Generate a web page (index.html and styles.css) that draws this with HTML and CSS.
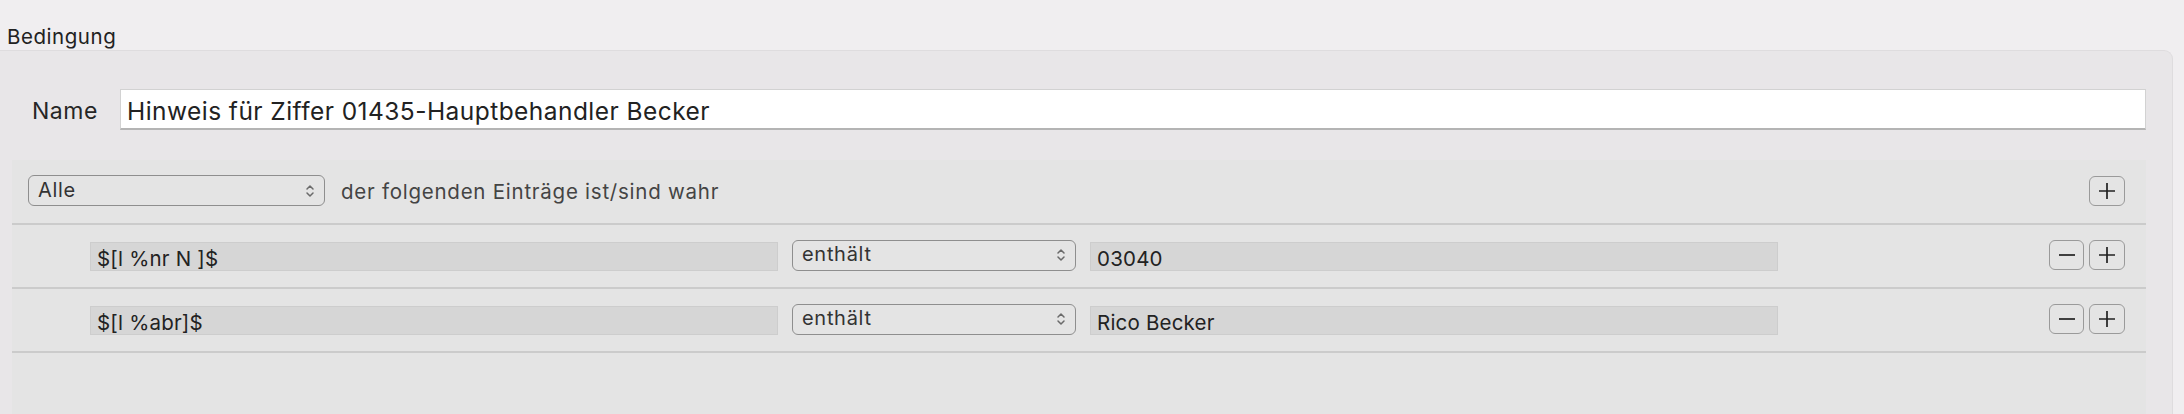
FILE: index.html
```html
<!DOCTYPE html>
<html lang="de">
<head>
<meta charset="utf-8">
<title>Bedingung</title>
<link rel="stylesheet" href="styles.css">
</head>
<body>
<div class="title">Bedingung</div>
<div class="panel">
  <div class="name-row">
    <span class="name-label">Name</span>
    <div class="name-input">Hinweis für Ziffer 01435-Hauptbehandler Becker</div>
  </div>
  <div class="rules">
    <div class="rule-head">
      <div class="popup popup-all"><span>Alle</span>
        <svg class="chev" viewBox="0 0 10 16" width="10" height="16"><path d="M2 6 L5 3 L8 6 M2 10 L5 13 L8 10" fill="none" stroke="#6a6a6a" stroke-width="1.5" stroke-linecap="round" stroke-linejoin="round"/></svg>
      </div>
      <span class="head-text">der folgenden Einträge ist/sind wahr</span>
      <div class="spacer"></div>
      <div class="btn"><svg viewBox="0 0 20 20" width="20" height="20"><path d="M2 10 H18 M10 2 V18" stroke="#222" stroke-width="1.7"/></svg></div>
    </div>
    <div class="rule">
      <div class="field">$[l %nr N ]$</div>
      <div class="popup popup-op"><span>enthält</span>
        <svg class="chev" viewBox="0 0 10 16" width="10" height="16"><path d="M2 6 L5 3 L8 6 M2 10 L5 13 L8 10" fill="none" stroke="#6a6a6a" stroke-width="1.5" stroke-linecap="round" stroke-linejoin="round"/></svg>
      </div>
      <div class="field">03040</div>
      <div class="spacer"></div>
      <div class="btns">
        <div class="btn"><svg viewBox="0 0 20 20" width="20" height="20"><path d="M2 10 H18" stroke="#222" stroke-width="1.7"/></svg></div>
        <div class="btn"><svg viewBox="0 0 20 20" width="20" height="20"><path d="M2 10 H18 M10 2 V18" stroke="#222" stroke-width="1.7"/></svg></div>
      </div>
    </div>
    <div class="rule">
      <div class="field">$[l %abr]$</div>
      <div class="popup popup-op"><span>enthält</span>
        <svg class="chev" viewBox="0 0 10 16" width="10" height="16"><path d="M2 6 L5 3 L8 6 M2 10 L5 13 L8 10" fill="none" stroke="#6a6a6a" stroke-width="1.5" stroke-linecap="round" stroke-linejoin="round"/></svg>
      </div>
      <div class="field">Rico Becker</div>
      <div class="spacer"></div>
      <div class="btns">
        <div class="btn"><svg viewBox="0 0 20 20" width="20" height="20"><path d="M2 10 H18" stroke="#222" stroke-width="1.7"/></svg></div>
        <div class="btn"><svg viewBox="0 0 20 20" width="20" height="20"><path d="M2 10 H18 M10 2 V18" stroke="#222" stroke-width="1.7"/></svg></div>
      </div>
    </div>
  </div>
</div>
</body>
</html>
```
FILE: styles.css
```css
html, body {
  margin: 0;
  padding: 0;
  height: 414px;
  overflow: hidden;
  background: #f0eef0;
  font-family: Inter, "Noto Sans", "Liberation Sans", sans-serif;
  color: #262626;
}

.title {
  height: 50px;
  box-sizing: border-box;
  padding: 25px 0 0 7px;
  font-size: 20.5px;
  letter-spacing: 0.55px;
  line-height: 24px;
  color: #222;
}

.panel {
  width: 2173px;
  box-sizing: border-box;
  background: #e8e6e8;
  border-top: 1px solid #dedcde;
  border-right: 1px solid #dedcde;
  border-radius: 0 9px 0 0;
  padding: 38px 26px 0 12px;
  height: 364px;
}

.name-row {
  display: flex;
  align-items: center;
  padding-left: 20px;
}

.name-label {
  width: 88px;
  font-size: 23px;
  letter-spacing: 0.5px;
  color: #262626;
  position: relative;
  top: 1px;
}

.name-input {
  flex: 1;
  height: 41px;
  box-sizing: border-box;
  background: #fff;
  border: 1px solid #d2d2d2;
  border-bottom: 2px solid #b4b4b4;
  padding: 2px 6px 0;
  font-size: 24.5px;
  letter-spacing: 0.45px;
  line-height: 38px;
  color: #222;
}

.rules {
  margin-top: 30px;
  background: #e4e4e4;
  height: 254px;
}

.rule-head {
  display: flex;
  align-items: center;
  height: 65px;
  box-sizing: border-box;
  padding: 0 21px 2px 16px;
  border-bottom: 2px solid #cbcbcb;
}

.rule {
  display: flex;
  align-items: center;
  height: 64px;
  box-sizing: border-box;
  padding: 0 21px 2px 78px;
  border-bottom: 2px solid #cbcbcb;
}

.popup {
  display: flex;
  align-items: center;
  height: 31px;
  box-sizing: border-box;
  border: 1.5px solid #8e8e8e;
  border-radius: 6px;
  padding: 0 9px;
  font-size: 20px;
  letter-spacing: 0.7px;
  color: #333;
}

.popup span {
  flex: 1;
  position: relative;
  top: -1px;
}

.popup-all {
  width: 297px;
}

.popup-op {
  width: 284px;
  margin: 0 14px;
}

.chev {
  display: block;
}

.head-text {
  margin-left: 16px;
  font-size: 20.5px;
  letter-spacing: 0.75px;
  color: #444;
  position: relative;
  top: 1px;
}

.spacer {
  flex: 1;
}

.field {
  width: 688px;
  height: 29px;
  box-sizing: border-box;
  background: #d6d6d6;
  border: 1px solid #cdcdcd;
  padding: 2px 6px 0;
  font-size: 20.5px;
  letter-spacing: 0.2px;
  line-height: 27px;
  color: #222;
  margin-top: 3px;
}

.btns {
  display: flex;
  gap: 5px;
}

.btn {
  width: 36px;
  height: 30px;
  box-sizing: border-box;
  border: 1.5px solid #9a9a9a;
  border-radius: 6px;
  display: flex;
  align-items: center;
  justify-content: center;
}

.btns .btn:first-child {
  width: 35px;
}

.btn svg {
  display: block;
}
```
